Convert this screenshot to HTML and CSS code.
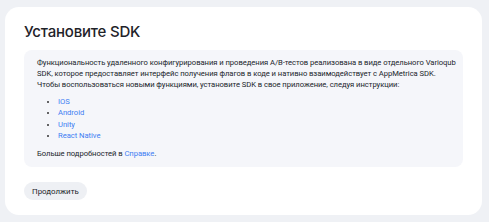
FILE: index.html
```html
<!DOCTYPE html>
<html lang="ru">
<head>
<meta charset="utf-8">
<link rel="stylesheet" href="styles.css">
</head>
<body>
<div class="card">
  <h1 class="title">Установите SDK</h1>
  <div class="info">
    <p class="lead">Функциональность удаленного конфигурирования и проведения A/B-тестов реализована в виде отдельного Varioqub<br>SDK, которое предоставляет интерфейс получения флагов в коде и нативно взаимодействует с AppMetrica SDK.<br>Чтобы воспользоваться новыми функциями, установите SDK в свое приложение, следуя инструкции:</p>
    <ul class="links">
      <li><a href="#">IOS</a></li>
      <li><a href="#">Android</a></li>
      <li><a href="#">Unity</a></li>
      <li><a href="#">React Native</a></li>
    </ul>
    <p class="more">Больше подробностей в <a href="#">Справке</a>.</p>
  </div>
  <button class="btn">Продолжить</button>
</div>
</body>
</html>
```
FILE: styles.css
```css
html, body {
  margin: 0;
  padding: 0;
}
body {
  background: #eff1f5;
  font-family: Roboto, "Noto Sans", sans-serif;
  color: #21252b;
  padding: 7px 7px 7px 5px;
  height: 222px;
  box-sizing: border-box;
}
.card {
  background: #fff;
  border-radius: 14px;
  width: 477px;
  height: 208px;
  box-sizing: border-box;
  padding: 15px 19px 15px 19px;
  display: flex;
  flex-direction: column;
  align-items: flex-start;
}
.title {
  margin: 0;
  font-family: Inter, Roboto, sans-serif;
  font-size: 15px;
  line-height: 20px;
  font-weight: 500;
  color: #1f2329;
  letter-spacing: -0.2px;
}
.info {
  margin-top: 8px;
  align-self: stretch;
  background: #f5f6fa;
  border-radius: 8px;
  padding: 7px 13px 8px 13px;
  font-size: 7.65px;
  line-height: 11px;
  letter-spacing: -0.05px;
}
.lead {
  margin: 0;
  white-space: nowrap;
}
.links {
  margin: 6px 0 0 0;
  padding-left: 21px;
  line-height: 11.33px;
}
.links li::marker {
  color: #333;
}
a {
  color: #3f7ef3;
  text-decoration: none;
}
.more {
  margin: 7px 0 0 0;
}
.btn {
  margin-top: 15px;
  border: none;
  background: #eef0f4;
  border-radius: 9px;
  height: 18px;
  padding: 0 8px;
  font-family: Roboto, sans-serif;
  font-size: 7.9px;
  color: #21252b;
}
```
